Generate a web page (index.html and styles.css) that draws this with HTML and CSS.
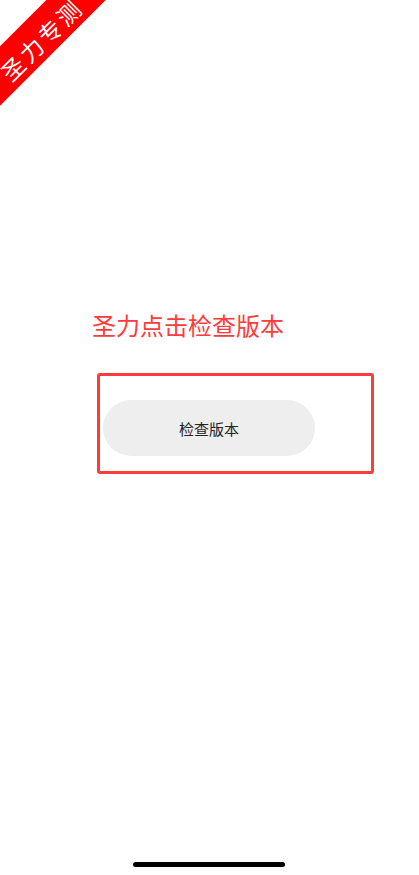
FILE: index.html
```html
<!DOCTYPE html>
<html lang="zh">
<head>
<meta charset="utf-8">
<title>检查版本</title>
<link rel="stylesheet" href="styles.css">
</head>
<body>
<div class="ribbon"><span class="ribbon-text">圣力专测</span></div>
<main class="page">
  <h1 class="title">圣力点击检查版本</h1>
  <div class="frame">
    <button class="btn" type="button">检查版本</button>
  </div>
</main>
<div class="home-indicator"></div>
</body>
</html>
```

FILE: styles.css
```css
html, body {
  margin: 0;
  padding: 0;
}
body {
  width: 419px;
  height: 875px;
  overflow: hidden;
  position: relative;
  background: #ffffff;
  font-family: "Noto Sans CJK SC", "Noto Sans", sans-serif;
}
.ribbon {
  position: absolute;
  left: -62px;
  top: 17px;
  box-sizing: border-box;
  width: 200px;
  height: 42px;
  padding-top: 6px;
  display: flex;
  align-items: center;
  justify-content: center;
  background: #ff0000;
  color: #ffffff;
  transform: rotate(-45deg);
  z-index: 2;
}
.ribbon-text {
  font-size: 23px;
  line-height: 23px;
  letter-spacing: 3px;
  margin-left: 3px;
}
.page {
  display: flex;
  flex-direction: column;
  padding-top: 313px;
}
.title {
  margin: 0 0 0 92px;
  font-size: 24px;
  line-height: 24px;
  font-weight: 400;
  color: #ff3b3b;
}
.frame {
  box-sizing: border-box;
  margin: 36px 0 0 97px;
  width: 277px;
  height: 101px;
  border: 3px solid #ff3b3b;
  border-radius: 3px;
  padding: 24px 0 0 3px;
}
.btn {
  display: flex;
  align-items: center;
  justify-content: center;
  width: 212px;
  height: 56px;
  border: 0;
  border-radius: 28px;
  background: #eeeeee;
  color: #222222;
  font-family: "Noto Sans CJK SC", "Noto Sans", sans-serif;
  font-size: 15px;
  padding: 0;
}
.home-indicator {
  position: absolute;
  left: 133px;
  top: 862px;
  width: 152px;
  height: 5px;
  border-radius: 3px;
  background: #000000;
}
```
